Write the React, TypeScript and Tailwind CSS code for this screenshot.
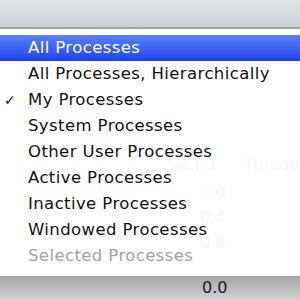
import React from 'react'

const items = [
  { label: 'All Processes', active: true },
  { label: 'All Processes, Hierarchically' },
  { label: 'My Processes', checked: true },
  { label: 'System Processes' },
  { label: 'Other User Processes' },
  { label: 'Active Processes' },
  { label: 'Inactive Processes' },
  { label: 'Windowed Processes' },
  { label: 'Selected Processes', disabled: true },
]

function MenuItem({ label, active, checked, disabled }: { label: string; active?: boolean; checked?: boolean; disabled?: boolean }) {
  let cls = 'relative h-[26px] flex items-center pl-[28px] text-[16.5px] tracking-[0.4px] whitespace-nowrap'
  if (active) cls += ' bg-linear-to-b from-[#5f80f6] to-[#1d3fef] text-white'
  else if (disabled) cls += ' text-[#a2a2a8]'
  else cls += ' text-[#111]'
  return (
    <div className={cls}>
      {checked && <span className="absolute left-[4px] text-[14px] font-bold">✓</span>}
      {label}
    </div>
  )
}

export default function App() {
  return (
    <div className="w-[300px] h-[300px] overflow-hidden flex flex-col bg-[#d0d0d0] font-['DejaVu_Sans',sans-serif]">
      <div className="h-[29px] shrink-0 bg-linear-to-b from-[#e2e5e9] to-[#cdd1d6] border-b-2 border-[#9da1a6]" />
      <div className="relative shrink-0 h-[247px] bg-white pt-[6px]">
        {/* table behind the menu, barely showing through */}
        <div className="absolute inset-0 overflow-hidden text-[#f6f6f6] text-[16px]">
          <div className="absolute left-[168px] top-[124px] flex gap-[28px] whitespace-nowrap">
            <span>%CPU</span>
            <span>Threads</span>
          </div>
          <div className="absolute left-[200px] top-[151px] flex flex-col leading-[25px]">
            <span>0.0</span>
            <span>0.4</span>
            <span>0.8</span>
          </div>
        </div>
        {items.map((it) => (
          <MenuItem key={it.label} {...it} />
        ))}
      </div>
      <div className="flex-1 bg-linear-to-b from-[#a4a4a4] to-[#d4d4d4] pl-[202px] text-[16px] leading-[20px] pt-[2px] text-[#1a1a2a]">
        0.0
      </div>
    </div>
  )
}
